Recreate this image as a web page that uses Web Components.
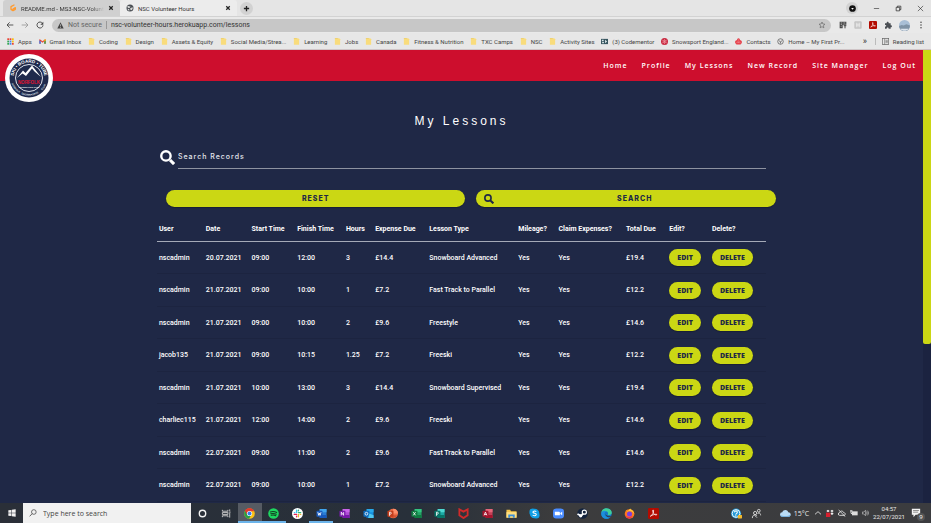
<!DOCTYPE html>
<html lang="en">
<head>
<meta charset="utf-8">
<title>NSC Volunteer Hours</title>
<style>
  html, body { margin: 0; height: 100%; }
  body { overflow: hidden; background: #1f2846; font-family: "Open Sans", "Noto Sans", sans-serif; }
</style>
</head>
<body>
<desktop-screen>
  <browser-tabs slot="chrome">
    <browser-tab icon="gitpod">README.md - MS3-NSC-Volunteer</browser-tab>
    <browser-tab icon="globe" active>NSC Volunteer Hours</browser-tab>
  </browser-tabs>
  <address-bar slot="chrome"></address-bar>
  <bookmarks-bar slot="chrome"></bookmarks-bar>
  <web-page>
    <site-nav slot="nav">
      <a href="#home">Home</a>
      <a href="#profile">Profile</a>
      <a href="#lessons">My Lessons</a>
      <a href="#new">New Record</a>
      <a href="#manager">Site Manager</a>
      <a href="#logout">Log Out</a>
    </site-nav>
    <record-search></record-search>
    <lesson-table></lesson-table>
  </web-page>
  <task-bar slot="taskbar"></task-bar>
</desktop-screen>

<script>
const define = (name, html, setup) => {
  const template = document.createElement('template');
  template.innerHTML = html;
  customElements.define(name, class extends HTMLElement {
    constructor() {
      super();
      this.attachShadow({ mode: 'open' }).append(template.content.cloneNode(true));
    }
    connectedCallback() { if (setup) setup(this, this.shadowRoot); }
  });
};

/* Icons: every drawing uses a 24 x 24 box. */
const office = (back, mid, front, letter) => `
  <rect x="8" y="2" width="15" height="20" rx="1.5" fill="${mid}"/>
  <path d="M8 2h14q1 0 1 1v6H8z" fill="${back}"/><path d="M8 15h15v6q0 1-1 1H8z" fill="${front}"/>
  <rect x="1" y="6" width="13" height="13" rx="1.5" fill="${front}"/>
  ${letter}`;
const stroke = (d, w = 2, extra = '') => `<path d="${d}" fill="none" stroke="currentColor" stroke-width="${w}" ${extra}/>`;
const white = (d, w = 1.8) => `<path d="${d}" fill="none" stroke="#fff" stroke-width="${w}"/>`;
const ICONS = {
  gitpod: `<path d="M15 3 6 8v8l6 4 7-4v-5l-7 4" fill="none" stroke="#ff9a2e" stroke-width="4" stroke-linejoin="round" stroke-linecap="round"/>`,
  globe: `<circle cx="12" cy="12" r="10.500" fill="#4b4f54"/><path d="M5 6c4-1 5 2 8 1l-1 4-5 1-3-3zM14 12l6-2c1 5-2 8-5 9l-3-4zM6 14l4 2v4c-3-1-5-3-5-6z" fill="#dcdcdc"/>`,
  close: stroke('M5 5l14 14M19 5 5 19', 5),
  plus: stroke('M12 3v18M3 12h18', 4.5),
  account: `<circle cx="12" cy="12" r="11.500" fill="#111"/><path d="M7.500 10h9L12 16z" fill="#fff"/>`,
  minimise: stroke('M3 12h18', 2),
  restore: stroke('M4 8h12v12H4zM8 8V4h12v12h-4', 2.4),
  shut: stroke('M3 3l18 18M21 3 3 21', 2),
  back: stroke('M22 12H3M11 4l-8 8 8 8', 2.6),
  forward: stroke('M2 12h19M13 4l8 8-8 8', 2.6),
  reload: stroke('M19.500 7A9 9 0 1 0 21 13', 2.8) + '<path d="M22 2v9h-9z" fill="currentColor"/>',
  warning: `<path d="M12 1 23 22H1z" fill="currentColor"/><path d="M12 8v7M12 17v3" stroke="#c7c7c7" stroke-width="2.500"/>`,
  star: stroke('M12 3l2.700 6 6.300.6-4.800 4.300 1.400 6.500L12 17l-5.600 3.400 1.400-6.500L3 9.600 9.300 9z', 2),
  qr: `<path d="M2 2h20v9H11v11H2z" fill="#444"/><path d="M5 6h5M13 6h6M5 11h4M5 17h3" stroke="#ddd" stroke-width="2"/><path d="M14 14h8M18 14v8" stroke="#444" stroke-width="3"/>`,
  honey: `<rect x="1" y="1" width="22" height="22" rx="3" fill="#c3c3c3"/><path d="M7 5v14M12 5v14M17 5v14M7 12h10" stroke="#f4f4f4" stroke-width="2"/>`,
  acrobat: `<rect x="0" y="0" width="24" height="24" rx="3" fill="#b30b00"/>` + white('M5 18c4-2 8-8 7-13-1-2-3 0-1 4 2 5 5 7 8 6 2-2-6-2-14 3z', 1.7),
  puzzle: `<path d="M3 7h5c-1-6 7-6 6 0h6v6c5-1 5 7 0 6v4h-6c0-5-6-5-6 0H3v-6c5 0 5-5 0-5z" fill="#4b4f54"/>`,
  avatar: `<circle cx="12" cy="12" r="12" fill="#a9bfd6"/><path d="M0 13l6-2 4 1 6-3 8 3a12 12 0 0 1-24 1z" fill="#7f93a6"/><path d="M3 19h18c-4 6-14 6-18 0z" fill="#dde5ee"/>`,
  more: `<circle cx="12" cy="4" r="2.300"/><circle cx="12" cy="12" r="2.300"/><circle cx="12" cy="20" r="2.300"/>`,
  apps: ['#ea4335','#ea4335','#fbbc05','#34a853','#4285f4','#fbbc05','#34a853','#4285f4','#ea4335'].map((c, i) => `<rect x="${1 + i % 3 * 8}" y="${1 + Math.floor(i / 3) * 8}" width="6" height="6" fill="${c}"/>`).join(''),
  gmail: `<path d="M1 5v15h5V11l6 5 6-5v9h5V5l-2-1-9 7-9-7z" fill="#ea4335"/><path d="M1 8v12h5v-9z" fill="#4285f4"/><path d="M18 11v9h5V8z" fill="#34a853"/><path d="M18 6l3-2 2 2v3l-5 3z" fill="#fbbc05"/>`,
  folder: `<path d="M3 1h15l3 3v19H3z" fill="#f9dc7c"/><path d="M3 1h10v2H3z" fill="#e9c65a"/>`,
  mentor: `<rect x="0" y="3" width="24" height="18" fill="#37555f"/><path d="M3 6h6v5H3zM14 6l7 6-7 6zM4 14h6v4H4z" fill="#dfe9ea"/>`,
  snow: `<circle cx="12" cy="12" r="12" fill="#c8283f"/><path d="M12 3v18M4 7l16 10M20 7 4 17" stroke="#ef9aa6" stroke-width="2"/><circle cx="12" cy="12" r="5" fill="none" stroke="#ef9aa6" stroke-width="1.500"/>`,
  huawei: `<path d="M12 1c4 0 5 4 5 6 4 0 7 4 7 9l-5 6H5l-5-6c0-5 3-9 7-9 0-2 1-6 5-6z" fill="#e5404a"/><path d="M12 4v12M6 8l5 9M18 8l-5 9M1 16h22" stroke="#f3b0b5" stroke-width="1"/>`,
  wheel: `<circle cx="12" cy="12" r="9.500" fill="none" stroke="#555" stroke-width="2.500"/><path d="M6 9l6 4 6-4M12 13v6" stroke="#555" stroke-width="2.500" fill="none"/>`,
  reading: `<rect x="1" y="2" width="22" height="20" fill="none" stroke="#666" stroke-width="2.500"/><path d="M9 2v20M12 8h8M12 12h8M12 16h8" stroke="#666" stroke-width="2"/>`,
  search: stroke('M16 16l6.500 6.500', 5) + `<circle cx="9.500" cy="9.500" r="7.500" fill="none" stroke="currentColor" stroke-width="3.800"/>`,
  windows: `<path d="M1 4l9-1.300V11H1zM11.500 2.500 23 1v10H11.500zM1 13h9v8.300L1 20zM11.500 13H23v10l-11.500-1.500z" fill="#f2f2f2"/>`,
  lens: `<circle cx="14.500" cy="9" r="7" fill="none" stroke="#333" stroke-width="2"/><path d="M9.500 14 2 22" stroke="#333" stroke-width="2.200"/>`,
  cortana: `<circle cx="12" cy="12" r="7" fill="none" stroke="#f2f2f2" stroke-width="3"/>`,
  taskview: `<path d="M3 4v3h12V4M3 20v-3h12v3M3 10h12v4H3zM19 3v4M19 11v10M17 9h4" fill="none" stroke="#ccc" stroke-width="2"/>`,
  chrome: `<circle cx="12" cy="12" r="11.500" fill="#fbc116"/><path d="M12 12 2 6.200A11.500 11.500 0 0 1 22 6.200L12 7z" fill="#e33b2e"/><path d="M2 6.200A11.500 11.500 0 0 0 11 23.500l5-9L12 12z" fill="#28a148"/><path d="M2 6.200 7 15l5-8h10A11.500 11.500 0 0 0 2 6.200z" fill="#e33b2e"/><circle cx="12" cy="12" r="5.600" fill="#fff"/><circle cx="12" cy="12" r="4.300" fill="#3b7de9"/>`,
  spotify: `<circle cx="12" cy="12" r="11.500" fill="#1ed760"/><path d="M5 8.500c5-1.500 10-1 14 1.300M6 12.500c4-1.200 8.500-.8 12 1.200M7 16c3.500-1 7-.7 10 1" stroke="#143d22" stroke-width="2.200" fill="none" stroke-linecap="round"/>`,
  slack: `<circle cx="12" cy="12" r="12" fill="#fff"/><g stroke-width="3" stroke-linecap="round"><path d="M10 5v5M5 10h1" stroke="#36c5f0"/><path d="M14 10h5M14 5v1" stroke="#2eb67d"/><path d="M14 14v5M19 14h-1" stroke="#ecb22e"/><path d="M10 14H5M10 19v-1" stroke="#e01e5a"/></g>`,
  word: office('#41a5ee', '#2b7cd3', '#185abd', white('M4 9l2 7 1.500-5L9 16l2-7')),
  onenote: office('#ca64ea', '#ae4bd5', '#7719aa', white('M5 16V9l5 7V9')),
  outlook: office('#28a8ea', '#1490df', '#0f6cbd', '<circle cx="7.500" cy="12.500" r="3" fill="none" stroke="#fff" stroke-width="1.800"/><path d="M14 12l9 4v6H11z" fill="#50c8f0"/>'),
  powerpoint: `<circle cx="13.500" cy="12" r="10.500" fill="#ed6c47"/><path d="M13.500 1.500A10.500 10.500 0 0 1 24 12H13.500z" fill="#ff8f6b"/><path d="M3.500 16h19a10.500 10.500 0 0 1-19 0z" fill="#d35230"/><rect x="1" y="6" width="13" height="13" rx="1.500" fill="#c43e1c"/>` + white('M5.500 17V9H8q3 2 0 4.500H5.500'),
  excel: office('#33c481', '#21a366', '#107c41', white('M5 9l5 7M10 9l-5 7')),
  publisher: office('#4fd8d3', '#1ba8a5', '#077568', white('M5.500 17V9H8q3 2 0 4.500H5.500')),
  mcafee: `<path d="M3 3l9 5 9-5v13l-9 6-9-6z" fill="none" stroke="#d02a2a" stroke-width="4"/>`,
  access: office('#e4677a', '#c43f56', '#a4142c', white('M4.500 16 7.500 9l3 7M5.500 14h4')),
  explorer: `<path d="M1 4h8l2 3h12v14H1z" fill="#f5c54a"/><path d="M1 9h22v12H1z" fill="#ffdf80"/><path d="M5 21v-7h14v7h-4v-3H9v3z" fill="#3c8fd8"/>`,
  skype: `<circle cx="12" cy="12" r="10.500" fill="#109fe6"/><circle cx="8" cy="8" r="7" fill="#109fe6"/><circle cx="16" cy="16" r="7" fill="#109fe6"/>` + white('M16 8q-4-3-7 0c-2 4 7 3 7 6q-2 5-8 1.500', 2.400),
  zoom: `<rect x="0" y="1" width="24" height="22" rx="7" fill="#4a8cff"/><path d="M4 8h9q2 0 2 2v6H6q-2 0-2-2zM16 11l4-3v8l-4-3z" fill="#fff"/>`,
  steam: `<circle cx="12" cy="12" r="11.500" fill="#14243e"/><path d="M1 13l8 4 6-7" stroke="#fff" stroke-width="4" fill="none"/><circle cx="16" cy="9" r="4.500" fill="#14243e" stroke="#fff" stroke-width="2.500"/><circle cx="8" cy="17" r="3.500" fill="#fff"/>`,
  edge: `<circle cx="12" cy="12" r="11.500" fill="#1577c9"/><path d="M.5 12C1 4 6 .5 12 .5c7 0 11.500 5 11.500 9.500 0 5-5 6-9 5 3-5-1-8-5-8C5 7 1 9 .5 12z" fill="#3fcf9a"/><path d="M.5 12c1-6 8-8 12-4-5-1-7 7-1 11 3 2 6 2 9 1-8 7-20 3-20-8z" fill="#1c8fdc"/><path d="M12 8c-3 2-3 7 2 9 4 2 8 1 9-1-2 8-14 3-13-3 0-2 1-4 2-5z" fill="#343539"/>`,
  firefox: `<circle cx="12" cy="13" r="10.500" fill="#ff7a1c"/><path d="M4 4c2 1 3 2 4 3 2-1 3-4 6-6 0 3 9 5 8.500 13-1-3-3-5-5-6-1-1-7-2-10 0z" fill="#ffc93a"/><circle cx="12" cy="13" r="5.500" fill="#7b3fe0"/><path d="M2 12c2 8 10 10 17 5-3 9-16 8-17-5z" fill="#f0304f"/>`,
  help: `<circle cx="11" cy="12" r="11" fill="#249ad8"/><circle cx="11" cy="12" r="8.500" fill="none" stroke="#fff" stroke-width="2"/>` + white('M7.500 9.500c1-5 8-3 6 1-1 2-3 2-3 4M10.500 16v2.500', 2.200) + `<rect x="15" y="15" width="9" height="8" rx="1" fill="#f2b92c"/>`,
  people: `<g fill="none" stroke="#ddd" stroke-width="2"><circle cx="9" cy="11" r="3.500"/><path d="M3 22c0-7 6-9 10-5M8 16l5 5"/><circle cx="17" cy="6" r="3"/><path d="M14 13c3-4 7-2 7 3"/></g>`,
  cloud: `<path d="M5 19a5 5 0 0 1 0-10c2-6 11-7 13 0 7 0 7 10 1 10z" fill="#b9dcf6"/><path d="M1 15c2 3 18 4 22-1 0 3-2 5-4 5H5c-2 0-4-2-4-4z" fill="#6db0e4"/>`,
  chevron: stroke('M3 16l9-8 9 8', 2.500),
  dropbox: `<path d="M1 6l5-4 5 4-5 4zM13 6l5-4 5 4-5 4zM13 14l5-4 5 4-5 4z" fill="#eee"/><rect x="0" y="11" width="13" height="13" fill="#d8202e"/>`,
  nosync: stroke('M5 19a4 4 0 0 1 0-8c1-6 10-7 12 0 6 0 6 7 2 8zM2 3l20 20', 2.600),
  battery: `<path d="M6 7h17v12H6z" fill="#ddd"/><path d="M1 6h7M3 3v10l5 2" fill="none" stroke="#ddd" stroke-width="3"/>`,
  volume: `<path d="M1 9h4l6-5v16l-6-5H1z" fill="none" stroke="#ccc" stroke-width="2"/><path d="M14 8q3 4 0 8M17 5q5 7 0 14" fill="none" stroke="#ccc" stroke-width="2"/>`,
  notify: `<path d="M2 2h20v14H11l-5 6v-6H2z" fill="#f3f3f3"/><path d="M5 6h14M5 10h12" stroke="#555" stroke-width="1.500"/>`
};
customElements.define('ui-icon', class extends HTMLElement {
  connectedCallback() {
    if (this.shadowRoot) return;
    this.attachShadow({ mode: 'open' }).innerHTML = `
      <style>:host{display:block;flex:none;width:8px;height:8px} svg{display:block;width:100%;height:100%;fill:currentColor}</style>
      <svg viewBox="0 0 24 24" aria-hidden="true">${ICONS[this.getAttribute('name')]}</svg>`;
  }
});

define('desktop-screen', `
  <style>
    :host { display: flex; flex-direction: column; height: 100vh; }
    .page { flex: 1; min-height: 0; display: flex; }
    .page ::slotted(*) { flex: 1; min-width: 0; }
    .bar { width: 8px; background: #1b2340; }
    .thumb { height: 65%; background: #cbd714; border-radius: 0 0 2px 2px; }
  </style>
  <slot name="chrome"></slot>
  <div class="page"><slot></slot><div class="bar"><div class="thumb"></div></div></div>
  <slot name="taskbar"></slot>`);

define('browser-tabs', `
  <style>
    :host { display: flex; align-items: stretch; height: 17px; background: #e5e5e5; padding-left: 3px; box-sizing: border-box; border-bottom: 1px solid #d2d2d2; }
    button { border: 0; padding: 0; background: none; color: #222; display: grid; place-items: center; }
    .new { width: 13px; height: 13px; border-radius: 50%; background: #d2d2d2; align-self: center; margin-left: 3px; }
    .window { margin-left: auto; display: flex; gap: 15px; align-items: center; padding-right: 7px; }
    .account { width: 12px; height: 12px; border-radius: 50%; background: #d2d2d2; }
    .window ui-icon { width: 7px; height: 7px; }
    .new ui-icon { width: 7px; height: 7px; }
  </style>
  <slot></slot>
  <button class="new" aria-label="New tab"><ui-icon name="plus"></ui-icon></button>
  <div class="window">
    <button class="account" aria-label="Account"><ui-icon name="account"></ui-icon></button>
    <button aria-label="Minimise"><ui-icon name="minimise"></ui-icon></button>
    <button aria-label="Restore"><ui-icon name="restore"></ui-icon></button>
    <button aria-label="Close window"><ui-icon name="shut"></ui-icon></button>
  </div>`);

define('browser-tab', `
  <style>
    :host { display: flex; align-items: center; gap: 4px; width: 117px; box-sizing: border-box; padding: 0 6px 0 6px; font: 6px Roboto, sans-serif; color: #333; background: #d0d0d0; border-radius: 3px 3px 0 0; }
    :host([active]) { background: #ececec; }
    .label { flex: 1; overflow: hidden; white-space: nowrap; }
    :host(:not([active])) .label { mask-image: linear-gradient(90deg, #000 85%, transparent); }
    button { border: 0; padding: 0; background: none; color: #222; }
    button ui-icon { width: 6px; height: 6px; }
  </style>
  <ui-icon class="fav"></ui-icon><span class="label"><slot></slot></span>
  <button aria-label="Close tab"><ui-icon name="close"></ui-icon></button>`,
  (host, root) => {
    const old = root.querySelector('.fav');
    const icon = document.createElement('ui-icon');
    icon.setAttribute('name', host.getAttribute('icon'));
    old.replaceWith(icon);
  });

define('address-bar', `
  <style>
    :host { display: flex; align-items: center; gap: 8px; height: 16px; background: #e9e9e9; padding: 0 6px; color: #444; }
    button { border: 0; padding: 0; background: none; color: inherit; }
    .nav { display: flex; gap: 7px; }
    .forward { color: #999; }
    .field { flex: 1; min-width: 0; height: 13px; border-radius: 7px; background: #c7c7c7; display: flex; align-items: center; gap: 4px; padding: 0 5px; font: 7px Roboto, sans-serif; color: #666; }
    .field > ui-icon { width: 7px; height: 7px; color: #444; }
    .sep { border-left: 1px solid #999; height: 8px; }
    input { flex: 1; min-width: 0; border: 0; padding: 0; background: none; font: inherit; color: #333; outline: 0; }
    .tools { display: flex; gap: 7px; align-items: center; }
  </style>
  <div class="nav">
    <button aria-label="Back"><ui-icon name="back"></ui-icon></button>
    <button class="forward" aria-label="Forward"><ui-icon name="forward"></ui-icon></button>
    <button aria-label="Reload"><ui-icon name="reload"></ui-icon></button>
  </div>
  <div class="field">
    <ui-icon name="warning"></ui-icon><span>Not secure</span><span class="sep"></span>
    <input aria-label="Address" value="nsc-volunteer-hours.herokuapp.com/lessons">
    <button aria-label="Bookmark"><ui-icon name="star"></ui-icon></button>
  </div>
  <div class="tools">
    <button aria-label="QR code"><ui-icon name="qr"></ui-icon></button>
    <button aria-label="Honey"><ui-icon name="honey"></ui-icon></button>
    <button aria-label="Acrobat"><ui-icon name="acrobat"></ui-icon></button>
    <button aria-label="Extensions"><ui-icon name="puzzle"></ui-icon></button>
    <button aria-label="Profile"><ui-icon name="avatar" style="width:11px;height:11px"></ui-icon></button>
    <button aria-label="Menu"><ui-icon name="more"></ui-icon></button>
  </div>`);

const BOOKMARKS = [['apps', 'Apps'], ['gmail', 'Gmail Inbox'], ['folder', 'Coding'], ['folder', 'Design'], ['folder', 'Assets & Equity'],
  ['folder', 'Social Media/Strea...'], ['folder', 'Learning'], ['folder', 'Jobs'], ['folder', 'Canada'], ['folder', 'Fitness & Nutrition'],
  ['folder', 'TXC Camps'], ['folder', 'NSC'], ['folder', 'Activity Sites'], ['mentor', '(3) Codementor'], ['snow', 'Snowsport England...'],
  ['huawei', 'Contacts'], ['wheel', 'Home – My First Pr...']];
define('bookmarks-bar', `
  <style>
    :host { display: flex; align-items: center; height: 16px; background: #e7e7e7; border-bottom: 1px solid #cfc4c6; padding: 0 7px; font: 6px Roboto, sans-serif; color: #444; }
    nav { flex: 1; display: flex; justify-content: space-between; }
    a { display: flex; align-items: center; gap: 4px; color: inherit; text-decoration: none; white-space: nowrap; }
    .more { border: 0; background: none; padding: 0; margin: 0 8px 0 18px; font: 9px/9px Roboto, sans-serif; color: #333; }
    .list { border-left: 1px solid #bbb; padding-left: 6px; }
    ui-icon { width: 7px; height: 7px; }
  </style>
  <nav></nav>
  <button class="more" aria-label="More bookmarks">»</button>
  <a class="list" href="#reading"><ui-icon name="reading"></ui-icon>Reading list</a>`,
  (host, root) => {
    root.querySelector('nav').innerHTML = BOOKMARKS.map(([i, t]) =>
      `<a href="#bookmark"><ui-icon name="${i}"></ui-icon>${t.replace('&', '&amp;')}</a>`).join('');
  });

define('site-nav', `
  <style>
    :host { display: flex; align-items: center; justify-content: flex-end; height: 31px; position: relative; background: #cd0e2d; padding-right: 7px; gap: 14px; }
    ::slotted(a) { font: 600 7px "Open Sans", sans-serif; letter-spacing: 1px; color: #fff; text-decoration: none; }
    .logo { position: absolute; left: 5px; top: 4px; width: 48px; height: 48px; }
    svg { display: block; }
    text { font-family: "Liberation Sans", sans-serif; font-weight: 700; }
  </style>
  <a class="logo" href="#home" aria-label="Norfolk Snowsports Club">
    <svg viewBox="0 0 96 96" width="48" height="48">
      <defs><path id="top" d="M18 56A31 31 0 1 1 78 56"/><path id="low" d="M12 55A37 37 0 0 0 84 55"/></defs>
      <circle cx="48" cy="48" r="48" fill="#fff"/>
      <circle cx="48" cy="48" r="39" fill="#1f2a4c"/>
      <circle cx="48" cy="48" r="27" fill="none" stroke="#dfe3ec" stroke-width="2"/>
      <text font-size="9" fill="#fff"><textPath href="#top" startOffset="50%" text-anchor="middle">SKI • BOARD • TUBE</textPath></text>
      <g font-size="5" fill="#dfe3ec" text-anchor="middle">
        <text><textPath href="#low" startOffset="17%">NORFOLK</textPath></text>
        <text><textPath href="#low" startOffset="52%">SNOWSPORTS</textPath></text>
        <text><textPath href="#low" startOffset="86%">CLUB</textPath></text>
      </g>
      <path d="M24 48 36 33l5 5 13-15 18 23-13-11-5-6-12 15-7-5z" fill="#fff"/>
      <text x="48" y="59" font-size="9" fill="#e0122f" text-anchor="middle">NORFOLK</text>
      <text x="48" y="67" font-size="4" fill="#fff" text-anchor="middle">SNOWSPORTS CLUB</text>
    </svg>
  </a>
  <slot></slot>`);

define('web-page', `
  <style>
    :host { display: block; overflow: hidden; background: #1f2846; color: #fff; }
    main { width: 66%; margin: 0 auto; }
    h1 { margin: 32px 0 16px; font: 400 12px/16px "Liberation Sans", sans-serif; letter-spacing: 3px; text-align: center; }
  </style>
  <slot name="nav"></slot>
  <main><h1>My Lessons</h1><slot></slot></main>`);

define('pill-button', `
  <style>
    :host { display: inline-block; vertical-align: middle; }
    button { display: grid; align-items: center; justify-items: center; width: 100%; height: 17px; padding: 0 8px; border: 0; border-radius: 9px; background: #cbd714; color: #1f2846; font: 800 7px "Open Sans", sans-serif; text-transform: uppercase; box-shadow: 0 1px 1px rgba(0,0,0,.25); }
    :host([wide]) button { font: 800 7px Inter, sans-serif; letter-spacing: 1px; }
    :host([with-icon]) button { grid-template-columns: auto 1fr; gap: 7px; }
    ::slotted(ui-icon) { width: 10px; height: 10px; }
  </style>
  <button type="button"><slot></slot></button>`);

define('record-search', `
  <style>
    :host { display: block; }
    .field { display: flex; align-items: center; gap: 3px; padding-left: 3px; }
    label ui-icon { width: 15px; height: 15px; }
    input { flex: 1; min-width: 0; height: 24px; box-sizing: border-box; border: 0; border-bottom: 1px solid #8d92a0; background: none; padding: 0; color: #fff; font: 500 7px Inter, sans-serif; letter-spacing: 1px; outline: 0; }
    input::placeholder { color: #e4e6ec; opacity: 1; }
    .actions { display: grid; grid-template-columns: 1fr 1fr; gap: 11px; margin: 21px -10px 0 9px; }
  </style>
  <div class="field">
    <label for="records" aria-label="Search Records"><ui-icon name="search"></ui-icon></label>
    <input id="records" type="text" placeholder="Search Records">
  </div>
  <div class="actions">
    <pill-button wide>Reset</pill-button>
    <pill-button wide with-icon><ui-icon name="search"></ui-icon>Search</pill-button>
  </div>`);

const HEADS = [['User', 7.7], ['Date', 7.5], ['Start Time', 7.5], ['Finish Time', 8], ['Hours', 4.8], ['Expense Due', 8.9],
  ['Lesson Type', 14.6], ['Mileage?', 6.6], ['Claim Expenses?', 11.1], ['Total Due', 7.1], ['Edit?', 7], ['Delete?', 9.2]];
const ROWS = [
  ['nscadmin', '20.07.2021', '09:00', '12:00', '3', '£14.4', 'Snowboard Advanced', 'Yes', 'Yes', '£19.4'],
  ['nscadmin', '21.07.2021', '09:00', '10:00', '1', '£7.2', 'Fast Track to Parallel', 'Yes', 'Yes', '£12.2'],
  ['nscadmin', '21.07.2021', '09:00', '10:00', '2', '£9.6', 'Freestyle', 'Yes', 'Yes', '£14.6'],
  ['jacob135', '21.07.2021', '09:00', '10:15', '1.25', '£7.2', 'Freeski', 'Yes', 'Yes', '£12.2'],
  ['nscadmin', '21.07.2021', '10:00', '13:00', '3', '£14.4', 'Snowboard Supervised', 'Yes', 'Yes', '£19.4'],
  ['charliec115', '21.07.2021', '12:00', '14:00', '2', '£9.6', 'Freeski', 'Yes', 'Yes', '£14.6'],
  ['nscadmin', '22.07.2021', '09:00', '11:00', '2', '£9.6', 'Fast Track to Parallel', 'Yes', 'Yes', '£14.6'],
  ['nscadmin', '22.07.2021', '09:00', '10:00', '1', '£7.2', 'Snowboard Advanced', 'Yes', 'Yes', '£12.2']];
define('lesson-table', `
  <style>
    :host { display: block; margin-top: 9px; }
    table { width: 100%; table-layout: fixed; border-collapse: collapse; font: 500 7px Roboto, sans-serif; }
    th, td { padding: 1px 2px 0; text-align: left; vertical-align: middle; white-space: nowrap; }
    th { font-weight: 700; }
    thead tr { height: 25px; border-bottom: 1px solid #a5aab8; }
    tbody tr { height: 32px; border-bottom: 1px solid #1c2440; }
    tbody tr:nth-child(even) { height: 33px; }
  </style>
  <table><colgroup></colgroup><thead></thead><tbody></tbody></table>`,
  (host, root) => {
    root.querySelector('colgroup').innerHTML = HEADS.map(h => `<col style="width:${h[1]}%">`).join('');
    root.querySelector('thead').innerHTML = '<tr>' + HEADS.map(h => `<th scope="col">${h[0]}</th>`).join('') + '</tr>';
    root.querySelector('tbody').innerHTML = ROWS.map(r => '<tr>' + r.map(c => `<td>${c}</td>`).join('') +
      '<td><pill-button>Edit</pill-button></td><td><pill-button>Delete</pill-button></td></tr>').join('');
  });

const PINNED = ['cortana', 'taskview', 'chrome', 'spotify', 'slack', 'word', 'onenote', 'outlook', 'powerpoint', 'excel', 'publisher',
  'mcafee', 'access', 'explorer', 'skype', 'zoom', 'steam', 'edge', 'firefox', 'acrobat'];
define('task-bar', `
  <style>
    :host { display: flex; align-items: stretch; height: 20px; background: linear-gradient(90deg, #2a2f38, #28303a 45%, #3c3c3d 60%, #3b3c3f); color: #e8e8e8; font: 7px "Open Sans", sans-serif; }
    button { border: 0; padding: 0; background: none; color: inherit; display: grid; place-items: center; }
    .start { width: 23px; }
    .search { width: 18%; display: flex; align-items: center; gap: 6px; background: #f1f1f1; padding: 0 6px; box-sizing: border-box; }
    .search ui-icon { width: 8px; height: 8px; }
    input { flex: 1; min-width: 0; border: 0; padding: 0; background: none; font: 7px "Open Sans", sans-serif; color: #333; outline: 0; }
    input::placeholder { color: #444; opacity: 1; }
    .pinned { width: 51%; display: grid; grid-template-columns: repeat(20, 1fr); }
    .pinned ui-icon { width: 11px; height: 11px; }
    .pinned [data-open] { box-shadow: inset 0 -2px #6cb4ea; }
    .pinned [data-front] { background: #565b63; }
    .tray { margin-left: auto; display: flex; align-items: center; gap: 4px; padding-right: 10px; }
    .apps { display: flex; gap: 9px; margin-right: 14px; }
    .weather { display: flex; align-items: center; gap: 3px; margin-right: 1px; }
    .apps ui-icon, .weather ui-icon { width: 11px; height: 11px; }
    .clock { font: 6px/8px Roboto, sans-serif; text-align: center; margin: 0 2px 0 -1px; }
    .note { position: relative; }
    .note ui-icon { width: 10px; height: 10px; }
    .count { position: absolute; right: -4px; bottom: -3px; width: 8px; height: 8px; border-radius: 50%; background: #555; font: 6px/8px "Open Sans", sans-serif; text-align: center; color: #fff; }
  </style>
  <button class="start" aria-label="Start"><ui-icon name="windows"></ui-icon></button>
  <label class="search"><ui-icon name="lens"></ui-icon><input aria-label="Search Windows" placeholder="Type here to search"></label>
  <div class="pinned"></div>
  <div class="tray">
    <div class="apps"><ui-icon name="help"></ui-icon><ui-icon name="people"></ui-icon></div>
    <div class="weather"><ui-icon name="cloud"></ui-icon><span>15°C</span></div>
    <ui-icon name="chevron"></ui-icon><ui-icon name="dropbox"></ui-icon><ui-icon name="nosync"></ui-icon><ui-icon name="battery"></ui-icon><ui-icon name="volume"></ui-icon>
    <div class="clock"><div>04:57</div><div>22/07/2021</div></div>
    <button class="note" aria-label="Notifications"><ui-icon name="notify"></ui-icon><span class="count">9</span></button>
  </div>`,
  (host, root) => {
    root.querySelector('.pinned').innerHTML = PINNED.map(n =>
      `<button aria-label="${n}" ${['chrome', 'spotify', 'word'].includes(n) ? 'data-open' : ''} ${n === 'chrome' ? 'data-front' : ''}><ui-icon name="${n}"></ui-icon></button>`).join('');
  });
</script>
</body>
</html>
